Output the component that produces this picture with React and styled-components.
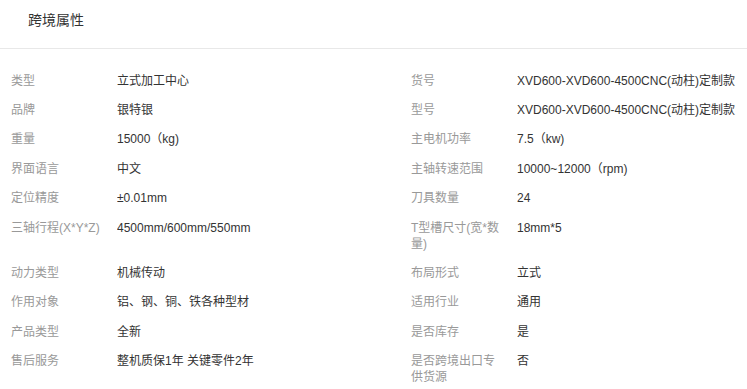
import React from 'react'
import styled, { createGlobalStyle } from 'styled-components'

const GlobalStyle = createGlobalStyle`
  html, body {
    margin: 0;
    padding: 0;
    background: #fff;
    overflow: hidden;
  }
  body {
    font-family: "Liberation Sans", Arial, "Noto Sans CJK SC", sans-serif;
  }
`

const leftAttrs = [
  ['类型', '立式加工中心'],
  ['品牌', '银特银'],
  ['重量', '15000（kg)'],
  ['界面语言', '中文'],
  ['定位精度', '±0.01mm'],
  ['三轴行程(X*Y*Z)', '4500mm/600mm/550mm'],
  ['动力类型', '机械传动'],
  ['作用对象', '铝、钢、铜、铁各种型材'],
  ['产品类型', '全新'],
  ['售后服务', '整机质保1年 关键零件2年'],
]

const rightAttrs = [
  ['货号', 'XVD600-XVD600-4500CNC(动柱)定制款'],
  ['型号', 'XVD600-XVD600-4500CNC(动柱)定制款'],
  ['主电机功率', '7.5（kw)'],
  ['主轴转速范围', '10000~12000（rpm)'],
  ['刀具数量', '24'],
  ['T型槽尺寸(宽*数量)', '18mm*5'],
  ['布局形式', '立式'],
  ['适用行业', '通用'],
  ['是否库存', '是'],
  ['是否跨境出口专供货源', '否'],
]

const App = () => {
  return (
    <Wrapper>
      <GlobalStyle />
      <Header>
        <Title>跨境属性</Title>
      </Header>
      <Grid>
        {leftAttrs.map((left, i) => (
          <React.Fragment key={i}>
            <Row>
              <Label>{left[0]}</Label>
              <Value>{left[1]}</Value>
            </Row>
            <Row>
              <Label>{rightAttrs[i][0]}</Label>
              <Value>{rightAttrs[i][1]}</Value>
            </Row>
          </React.Fragment>
        ))}
      </Grid>
    </Wrapper>
  )
}

export default App

const Wrapper = styled.div`
  width: 100%;
  overflow: hidden;
`

const Header = styled.div`
  padding: 10px 28px 18px;
  border-bottom: 1px solid #e8e8e8;
`

const Title = styled.h3`
  margin: 0;
  font-size: 14px;
  line-height: 20px;
  font-weight: normal;
  color: #333;
`

const Grid = styled.div`
  display: grid;
  grid-template-columns: 400px minmax(0, 1fr);
  padding: 17px 0 0 11px;
`

const Row = styled.div`
  display: flex;
  align-items: flex-start;
  padding: 6.7px 0;
  font-size: 12px;
  line-height: 16px;
  min-width: 0;
`

const Label = styled.div`
  flex: 0 0 92px;
  padding-right: 14px;
  color: #999;
`

const Value = styled.div`
  flex: 1;
  min-width: 0;
  color: #333;
  white-space: nowrap;
  overflow: hidden;
`
